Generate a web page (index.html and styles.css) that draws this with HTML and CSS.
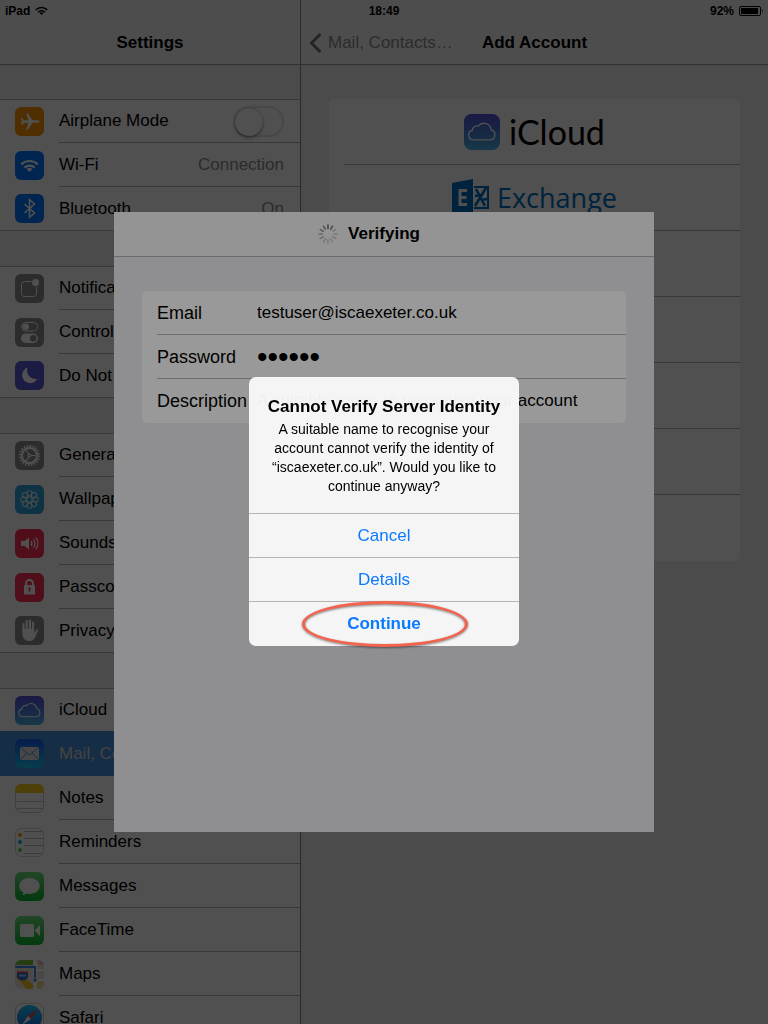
FILE: index.html
```html
<!DOCTYPE html>
<html lang="en">
<head>
<meta charset="utf-8">
<meta name="viewport" content="width=device-width, initial-scale=1">
<title>Settings</title>
<link rel="stylesheet" href="styles.css">
</head>
<body>
<svg class="defs" aria-hidden="true">
  <defs>
    <linearGradient id="g-cloud" x1="0" y1="0" x2="0" y2="1"><stop offset="0" stop-color="#5a50d8"/><stop offset=".5" stop-color="#4a80dc"/><stop offset="1" stop-color="#4cb4ea"/></linearGradient>
    <linearGradient id="g-mail" x1="0" y1="0" x2="0" y2="1"><stop offset="0" stop-color="#1a5cf0"/><stop offset="1" stop-color="#18c4f4"/></linearGradient>
    <linearGradient id="g-green" x1="0" y1="0" x2="0" y2="1"><stop offset="0" stop-color="#6de07c"/><stop offset="1" stop-color="#0cb82c"/></linearGradient>
    <linearGradient id="g-safari" x1="0" y1="0" x2="0" y2="1"><stop offset="0" stop-color="#1bc8f8"/><stop offset="1" stop-color="#1d68ee"/></linearGradient>
    <symbol id="cloud" viewBox="0 0 29 29">
      <rect width="29" height="29" rx="6" fill="url(#g-cloud)"/>
      <path d="M7.500 20.800a3.900 3.900 0 0 1-.7-7.700 3.400 3.400 0 0 1 4.600-3.300 5.900 5.900 0 0 1 10.500 3 4.100 4.100 0 0 1-.5 8z" fill="none" stroke="#fff" stroke-width="1.1"/>
    </symbol>
    <symbol id="wifi" viewBox="0 0 29 29">
      <g fill="none" stroke="currentColor" stroke-width="2.2"><path d="M6.2 13.4a11.8 11.8 0 0 1 16.6 0"/><path d="M9.4 16.7a7.2 7.2 0 0 1 10.2 0"/></g>
      <path d="M14.5 21l-2.9-2.9a4.1 4.1 0 0 1 5.8 0z" fill="currentColor"/>
    </symbol>
  </defs>
</svg>

<div class="app">
  <header class="status">
    <span class="carrier">iPad <svg class="status-wifi" viewBox="5 8 19 14"><use href="#wifi" width="29" height="29"/></svg></span>
    <time>18:49</time>
    <span class="power">92%
      <svg width="24" height="10" viewBox="0 0 24 10"><rect x=".5" y=".5" width="21" height="9" rx="1.5" fill="none" stroke="#000"/><rect x="2" y="2" width="17" height="6" fill="#000"/><path d="M23 3q1.4 2 0 4z"/></svg>
    </span>
  </header>

  <aside class="sidebar">
    <div class="navbar"><h1>Settings</h1></div>
    <nav class="groups">
      <ul class="group">
        <li class="row">
          <svg class="icon" viewBox="0 0 29 29"><rect width="29" height="29" rx="6" fill="#ff9500"/><path d="M24.5 14.5c0 .8-.8 1.2-1.8 1.2h-5.2l-4.6 7h-1.8l2.3-7H9l-1.7 2.2H6l.8-3.4-.8-3.4h1.3L9 13.300h4.400l-2.300-7h1.800l4.600 7h5.200c1 0 1.800.4 1.800 1.200z" fill="#fff"/></svg>
          <label class="label" for="airplane">Airplane Mode</label>
          <input class="switch" id="airplane" type="checkbox" role="switch">
        </li>
        <li><a class="row" href="#wifi-settings">
          <svg class="icon blue" viewBox="0 0 29 29"><rect width="29" height="29" rx="6" fill="#007aff"/><use href="#wifi" width="29" height="29"/></svg>
          <span class="label">Wi-Fi</span><span class="value">Connection</span></a></li>
        <li><a class="row" href="#bluetooth">
          <svg class="icon" viewBox="0 0 29 29"><rect width="29" height="29" rx="6" fill="#007aff"/><path d="M9.500 10l10 9-5 4.300V5.700l5 4.300-10 9" fill="none" stroke="#fff" stroke-width="1.600"/></svg>
          <span class="label">Bluetooth</span><span class="value">On</span></a></li>
      </ul>

      <ul class="group">
        <li><a class="row" href="#notifications">
          <svg class="icon" viewBox="0 0 29 29"><rect width="29" height="29" rx="6" fill="#8e8e93"/><path d="M16.500 7.500H9.500a3 3 0 0 0-3 3v9a3 3 0 0 0 3 3h9a3 3 0 0 0 3-3v-7" fill="none" stroke="#fff"/><circle cx="20.500" cy="8.500" r="3.500" fill="#fff"/></svg>
          <span class="label">Notification Center</span></a></li>
        <li><a class="row" href="#control">
          <svg class="icon" viewBox="0 0 29 29"><rect width="29" height="29" rx="6" fill="#8e8e93"/><rect x="6.500" y="4.500" width="16" height="8.500" rx="4.200" fill="none" stroke="#fff"/><circle cx="10.700" cy="8.700" r="3.200" fill="#fff"/><rect x="6" y="15.500" width="17" height="9.500" rx="4.700" fill="#fff"/><circle cx="18.200" cy="20.200" r="3.200" fill="#8e8e93"/></svg>
          <span class="label">Control Center</span></a></li>
        <li><a class="row" href="#dnd">
          <svg class="icon" viewBox="0 0 29 29"><rect width="29" height="29" rx="6" fill="#5856d6"/><path d="M12.500 6.600a8 8 0 1 0 9.800 11.200A8.600 8.600 0 0 1 12.500 6.600z" fill="#fff"/></svg>
          <span class="label">Do Not Disturb</span></a></li>
      </ul>

      <ul class="group">
        <li><a class="row" href="#general">
          <svg class="icon" viewBox="0 0 29 29"><rect width="29" height="29" rx="6" fill="#8e8e93"/><circle cx="14.500" cy="14.500" r="9.700" fill="none" stroke="#fff" stroke-width="2" stroke-dasharray="1.540 1.507"/><circle cx="14.500" cy="14.500" r="7.600" fill="none" stroke="#fff" stroke-width="2.200"/><path d="M14.500 14.500h6M14.500 14.500l-3.500-6M14.500 14.500l-3.500 6" stroke="#fff" stroke-width="1.200"/><circle cx="14.500" cy="14.500" r="2" fill="#fff"/><circle cx="14.500" cy="14.500" r=".8" fill="#8e8e93"/></svg>
          <span class="label">General</span></a></li>
        <li><a class="row" href="#wallpapers">
          <svg class="icon" viewBox="0 0 29 29"><rect width="29" height="29" rx="6" fill="#2ea6dc"/><g fill="none" stroke="#fff" stroke-width="1"><circle cx="14.500" cy="14.500" r="2.700"/><circle cx="14.500" cy="8.300" r="2.700"/><circle cx="14.500" cy="20.700" r="2.700"/><circle cx="8.300" cy="14.500" r="2.700"/><circle cx="20.700" cy="14.500" r="2.700"/><circle cx="10.100" cy="10.100" r="2.700"/><circle cx="18.900" cy="10.100" r="2.700"/><circle cx="10.100" cy="18.900" r="2.700"/><circle cx="18.900" cy="18.900" r="2.700"/></g></svg>
          <span class="label">Wallpapers &amp; Brightness</span></a></li>
        <li><a class="row" href="#sounds">
          <svg class="icon" viewBox="0 0 29 29"><rect width="29" height="29" rx="6" fill="#ff2d55"/><path d="M6 12h3.500L14 8.500v12L9.500 17H6z" fill="#fff"/><g fill="none" stroke="#fff" stroke-width="1.200"><path d="M16 12q2 2.500 0 5M18.300 10.300q3.400 4.200 0 8.400M20.700 8.700q4.800 5.800 0 11.600"/></g></svg>
          <span class="label">Sounds</span></a></li>
        <li><a class="row" href="#passcode">
          <svg class="icon" viewBox="0 0 29 29"><rect width="29" height="29" rx="6" fill="#ff2d55"/><path d="M11 14v-3.500a3.500 3.500 0 0 1 7 0V14" fill="none" stroke="#fff" stroke-width="2"/><rect x="9" y="12" width="11" height="9.500" rx=".8" fill="#fff"/><path d="M14.500 14.300a1.300 1.300 0 0 1 .6 2.400v2h-1.200v-2a1.300 1.300 0 0 1 .6-2.400z" fill="#ff2d55"/></svg>
          <span class="label">Passcode</span></a></li>
        <li><a class="row" href="#privacy">
          <svg class="icon" viewBox="0 0 29 29"><rect width="29" height="29" rx="6" fill="#8e8e93"/><path d="M8.500 16V8m3.200 6V5m3.200 9V4.500M18 14V6.500" stroke="#fff" stroke-width="2.200" stroke-linecap="round"/><path d="M7.400 13h11.800v4l2-3c.8-1.200 2.200-.9 1.800.4l-3 7.200c-1 2.300-2.600 3.400-5.400 3.400-5 0-7.200-3-7.200-8z" fill="#fff"/></svg>
          <span class="label">Privacy</span></a></li>
      </ul>

      <ul class="group">
        <li><a class="row" href="#icloud"><svg class="icon"><use href="#cloud"/></svg><span class="label">iCloud</span></a></li>
        <li><a class="row selected" href="#mail" aria-current="page">
          <svg class="icon" viewBox="0 0 29 29"><rect width="29" height="29" rx="6" fill="url(#g-mail)"/><rect x="5" y="8" width="19" height="13" fill="#e4e4e4"/><path d="M5 8l9.500 8L24 8M5 21l6.800-7M24 21l-6.800-7" fill="none" stroke="#5a9ad8" stroke-width="1"/></svg>
          <span class="label">Mail, Contacts, Calendars</span></a></li>
        <li><a class="row" href="#notes">
          <svg class="icon" viewBox="0 0 29 29"><rect x=".5" y=".5" width="28" height="28" rx="6" fill="#fff" stroke="#ccc"/><path d="M0 9V6a6 6 0 0 1 6-6h17a6 6 0 0 1 6 6v3z" fill="#fecb1c"/><path d="M1 17.500h27M1 24.500h27" stroke="#ccc"/></svg>
          <span class="label">Notes</span></a></li>
        <li><a class="row" href="#reminders">
          <svg class="icon" viewBox="0 0 29 29"><rect x=".5" y=".5" width="28" height="28" rx="6" fill="#fff" stroke="#d4d4d4"/><path d="M9 3.500h19M9 10.500h19M9 17.500h19M9 25.500h18" stroke="#bbb"/><circle cx="5" cy="7" r="2" fill="#ff9500"/><circle cx="5" cy="14" r="2" fill="#1badf8"/><circle cx="5" cy="22" r="2" fill="#63da38"/></svg>
          <span class="label">Reminders</span></a></li>
        <li><a class="row" href="#messages">
          <svg class="icon" viewBox="0 0 29 29"><rect width="29" height="29" rx="6" fill="url(#g-green)"/><path d="M14.500 6C8.700 6 4.200 9.500 4.200 14c0 2.700 1.700 5 4.300 6.400-.1 1.200-.6 2-1.300 2.700 1.800 0 3.300-.6 4.300-1.500 1 .2 2 .3 3 .3 5.800 0 10.300-3.400 10.300-7.900S20.300 6 14.500 6z" fill="#fff"/></svg>
          <span class="label">Messages</span></a></li>
        <li><a class="row" href="#facetime">
          <svg class="icon" viewBox="0 0 29 29"><rect width="29" height="29" rx="6" fill="url(#g-green)"/><rect x="5" y="8" width="14" height="13" rx="1.500" fill="#fff"/><path d="M19.500 14.500L25 9v11z" fill="#fff"/></svg>
          <span class="label">FaceTime</span></a></li>
        <li><a class="row" href="#maps">
          <svg class="icon maps" viewBox="0 0 29 29"><rect width="29" height="29" fill="#efe8da"/><path d="M0 0h18v5H0z" fill="#76c83c"/><path d="M22 0h7v5h-5z" fill="#f4b8c4"/><path d="M18 0h4v29h-4z" fill="#fff"/><path d="M0 16l5-3 14 13-2 3h-5z" fill="#fcc624"/><path d="M22 22h7v7h-7z" fill="#f4d88c"/><path d="M22 20h7M22 10h7" stroke="#fff" stroke-width="2"/><path d="M0 7h20v13" fill="none" stroke="#3a8cf0" stroke-width="2"/><path d="M2 12.500h11v4q-1 4-5.500 4T2 16.500z" fill="#2f6fe0"/><path d="M2 11.500h11v1.500H2z" fill="#e04848"/><path d="M4 15.500h7" stroke="#a8c8f4" stroke-width="2"/><circle cx="20" cy="20" r="2" fill="#3a8cf0" stroke="#fff" stroke-width=".6"/></svg>
          <span class="label">Maps</span></a></li>
        <li><a class="row" href="#safari">
          <svg class="icon" viewBox="0 0 29 29"><rect x=".5" y=".5" width="28" height="28" rx="6" fill="#fff" stroke="#d4d4d4"/><circle cx="14.500" cy="14.500" r="12.500" fill="url(#g-safari)"/><path d="M22.500 6.500l-6.600 9.400-2.800-2.800z" fill="#ff3b30"/><path d="M6.500 22.500l6.600-9.400 2.800 2.800z" fill="#fff"/></svg>
          <span class="label">Safari</span></a></li>
      </ul>
    </nav>
  </aside>

  <main class="detail">
    <div class="navbar split">
      <a class="back" href="#mail"><svg width="13" height="20" viewBox="0 0 13 20"><path d="M11.500 1L2.500 10l9 9" fill="none" stroke="currentColor" stroke-width="3"/></svg>Mail, Contacts…</a>
      <h2>Add Account</h2>
    </div>
    <ul class="providers">
      <li><a class="provider icloud" href="#add-icloud"><svg width="36" height="36"><use href="#cloud"/></svg>iCloud</a></li>
      <li><a class="provider exchange" href="#add-exchange"><svg width="38" height="38" viewBox="0 0 38 38"><path d="M0 4L21 0v38L0 34z" fill="#0072c6"/><path d="M15 11.500H8v14h7M8 18.500h6.500" fill="none" stroke="#fff" stroke-width="3"/><path d="M22 8h14v21H22" fill="none" stroke="#0072c6" stroke-width="2"/><path d="M24 10l9 17M34 9L23 27M23 17l6-1M29 21l6-1" stroke="#0072c6" stroke-width="2.600"/></svg>Exchange</a></li>
      <li class="provider"></li>
      <li class="provider"></li>
      <li class="provider"></li>
      <li class="provider"></li>
      <li class="provider"></li>
    </ul>
  </main>
</div>

<div class="layer sheet-layer">
  <form class="sheet">
    <header class="sheet-bar">
      <svg width="20" height="20" viewBox="-10 -10 20 20" stroke="#444" stroke-width="1.500" stroke-linecap="round">
        <path d="M0-5.500V-9" opacity=".8"/><path d="M0-5.500V-9" transform="rotate(30)" opacity=".7"/><path d="M0-5.500V-9" transform="rotate(60)" opacity=".25"/><path d="M0-5.500V-9" transform="rotate(90)" opacity=".25"/><path d="M0-5.500V-9" transform="rotate(120)" opacity=".25"/><path d="M0-5.500V-9" transform="rotate(150)" opacity=".25"/><path d="M0-5.500V-9" transform="rotate(180)" opacity=".25"/><path d="M0-5.500V-9" transform="rotate(210)" opacity=".3"/><path d="M0-5.500V-9" transform="rotate(240)" opacity=".35"/><path d="M0-5.500V-9" transform="rotate(270)" opacity=".4"/><path d="M0-5.500V-9" transform="rotate(300)" opacity=".5"/><path d="M0-5.500V-9" transform="rotate(330)" opacity=".6"/>
      </svg>
      <h2>Verifying</h2>
    </header>
    <div class="fields">
      <div class="field"><label for="email">Email</label><input id="email" type="text" value="testuser@iscaexeter.co.uk"></div>
      <div class="field"><label for="password">Password</label><input id="password" type="password" value="secret"></div>
      <div class="field"><label for="description">Description</label><input id="description" type="text" value="A suitable name to recognise your account"></div>
    </div>
  </form>
</div>

<div class="layer alert-layer">
  <section class="alert" role="alertdialog" aria-labelledby="alert-title" aria-describedby="alert-text">
    <div class="alert-body">
      <h2 id="alert-title">Cannot Verify Server Identity</h2>
      <p id="alert-text">A suitable name to recognise your account cannot verify the identity of “iscaexeter.co.uk”. Would you like to continue anyway?</p>
    </div>
    <button type="button">Cancel</button>
    <button type="button">Details</button>
    <button type="button" class="primary">Continue</button>
  </section>
</div>
</body>
</html>
```

FILE: styles.css
```css
* { box-sizing: border-box; }
html, body { height: 100%; }
body {
  margin: 0;
  overflow: hidden;
  font: 17px/20px "Liberation Sans", Arial, sans-serif;
  color: #000;
  background: #efeff4;
}
h1, h2, p, ul { margin: 0; padding: 0; }
h1, h2 { font-size: 17px; line-height: 20px; font-weight: bold; }
ul { list-style: none; }
a { color: inherit; text-decoration: none; }
svg { flex: none; display: block; }
.defs { position: absolute; width: 0; height: 0; }

.app { position: relative; display: flex; height: 100vh; overflow: hidden; }

/* Status bar, drawn over both navigation bars */
.status {
  position: absolute;
  inset: 0 0 auto;
  display: grid;
  grid-template-columns: 1fr auto 1fr;
  align-items: center;
  height: 21px;
  padding: 0 5px;
  font-size: 12px;
  line-height: 20px;
  font-weight: bold;
}
.carrier, .power { display: flex; align-items: center; gap: 5px; }
.power { justify-content: flex-end; }
.status-wifi { width: 13px; height: 10px; }

/* Panes */
.sidebar { flex: 0 0 301px; border-right: 1px solid #8a8a8e; overflow: hidden; }
.detail { flex: 1; min-width: 0; }
.navbar {
  display: flex;
  align-items: center;
  justify-content: center;
  height: 65px;
  padding-top: 22px;
  background: #f7f7f7;
  border-bottom: 1px solid #a0a0a5;
}
.split { display: grid; grid-template-columns: 1fr auto 1fr; }
.back { display: flex; align-items: center; gap: 6px; padding-left: 8px; color: #8e8e93; white-space: nowrap; }
.back svg { color: #747478; }

/* Settings list */
.groups { display: flex; flex-direction: column; gap: 35px; padding-top: 34px; }
.group { background: linear-gradient(#b4b4b8, #b4b4b8) top / 100% 1px no-repeat #fff; border-bottom: 1px solid #b4b4b8; }
.group li:last-child .row { height: 43px; }
.row { position: relative; display: flex; align-items: center; height: 44px; padding: 0 16px 0 15px; gap: 15px; white-space: nowrap; }
.group li:not(:last-child) .row::after, li.row::after {
  content: "";
  position: absolute;
  inset: auto 0 0 59px;
  height: 1px;
  background: #b4b4b8;
}
.icon { width: 29px; height: 29px; }
.blue { color: #fff; }
.maps { border-radius: 6px; }
.label { flex: 1; }
.value { color: #8e8e93; }
.group .selected { height: 45px; margin-top: -1px; background: #4a90e2; color: #d9d9d9; }
.group li .selected.row::after { display: none; }
.switch {
  appearance: none;
  width: 51px;
  height: 31px;
  margin: 0;
  border: 2px solid #e5e5e5;
  border-radius: 16px;
}
.switch::before {
  content: "";
  display: block;
  width: 28px;
  height: 28px;
  border-radius: 50%;
  background: #fff;
  box-shadow: 0 2px 3px rgba(0, 0, 0, .35), 0 0 1px rgba(0, 0, 0, .5);
}

/* Account providers */
.providers { margin: 34px 28px 0; background: #fff; border-radius: 5px; }
.provider { display: flex; align-items: center; justify-content: center; height: 66px; }
.providers li { background: linear-gradient(#b4b4b8, #b4b4b8) right bottom / calc(100% - 15px) 1px no-repeat; }
.providers li:last-child { background: none; }
.icloud { gap: 9px; font: 34px/40px Lato, sans-serif; }
.exchange { gap: 7px; font: 27px/40px "Open Sans", sans-serif; color: #0072c6; }

/* Modal layers */
.layer { position: fixed; inset: 0; display: flex; align-items: center; justify-content: center; }
.sheet-layer { padding-top: 20px; background: rgba(0, 0, 0, .48); }
.alert-layer { padding-bottom: 1px; background: rgba(0, 0, 0, .4); }

.sheet { width: 540px; height: 620px; max-width: 100%; max-height: 100%; background: #efeff4; }
.sheet-bar {
  display: grid;
  grid-template-columns: 1fr auto 1fr;
  align-items: center;
  gap: 10px;
  height: 45px;
  background: #f7f7f7;
  border-bottom: 1px solid #b2b2b2;
}
.sheet-bar svg { justify-self: end; }
.fields { margin: 34px 28px; background: #fff; border-radius: 5px; }
.field { display: flex; align-items: center; height: 44px; background: linear-gradient(#b8b8bc, #b8b8bc) right bottom / calc(100% - 15px) 1px no-repeat; }
.field:last-child { background: none; }
.field label { width: 115px; padding-left: 15px; font-size: 18px; }
.field input { flex: 1; min-width: 0; padding: 0; border: 0; background: none; font: inherit; color: inherit; }
.field input[type="password"] { height: 40px; font-size: 30px; }

.alert { width: 270px; padding-bottom: 1px; border-radius: 7px; background: rgba(249, 249, 249, .96); text-align: center; }
.alert-body { padding: 20px 15px 17px; }
.alert p { font-size: 14px; line-height: 19px; padding-top: 3px; }
.alert button {
  position: relative;
  display: block;
  width: 100%;
  height: 44px;
  padding: 0;
  border: 0;
  border-top: 1px solid #b4b4b6;
  background: none;
  font: inherit;
  color: #0a7aff;
}
.alert .primary { font-weight: bold; }
.primary::after {
  content: "";
  position: absolute;
  inset: -1px 51px -2px 53px;
  border: 3px solid #f4634d;
  border-radius: 50%;
  filter: drop-shadow(0 1px 1px rgba(0, 0, 0, .5));
}
```
